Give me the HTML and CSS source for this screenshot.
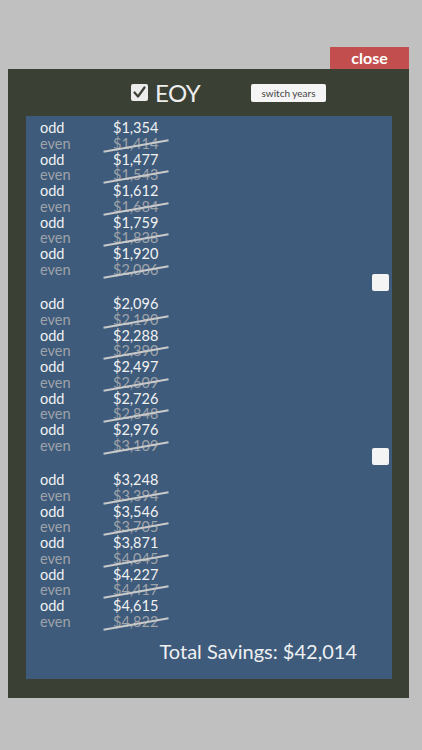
FILE: index.html
```html
<!DOCTYPE html>
<html>
<head>
<meta charset="utf-8">
<link rel="stylesheet" href="styles.css">
</head>
<body>
<div class="screen">
  <div class="close-row"><div class="close-btn">close</div></div>
  <div class="panel">
    <div class="header">
      <div class="eoy-check">
        <svg width="17" height="17" viewBox="0 0 17 17"><rect x="0" y="0" width="17" height="17" rx="2" fill="#ececec"/><path d="M3.5 8.5 L7 12.5 L13.5 3.5" fill="none" stroke="#3b4034" stroke-width="2.2" stroke-linecap="round" stroke-linejoin="round"/></svg>
      </div>
      <div class="eoy-label">EOY</div>
      <div class="switch-btn">switch years</div>
    </div>
    <div class="board">
      <div class="group">
        <div class="row odd"><span class="lbl">odd</span><span class="amt">$1,354</span></div>
        <div class="row even"><span class="lbl">even</span><span class="amt">$1,414</span></div>
        <div class="row odd"><span class="lbl">odd</span><span class="amt">$1,477</span></div>
        <div class="row even"><span class="lbl">even</span><span class="amt">$1,543</span></div>
        <div class="row odd"><span class="lbl">odd</span><span class="amt">$1,612</span></div>
        <div class="row even"><span class="lbl">even</span><span class="amt">$1,684</span></div>
        <div class="row odd"><span class="lbl">odd</span><span class="amt">$1,759</span></div>
        <div class="row even"><span class="lbl">even</span><span class="amt">$1,838</span></div>
        <div class="row odd"><span class="lbl">odd</span><span class="amt">$1,920</span></div>
        <div class="row even"><span class="lbl">even</span><span class="amt">$2,006</span></div>
      </div>
      <div class="sep sep1"><span class="box"></span></div>
      <div class="group">
        <div class="row odd"><span class="lbl">odd</span><span class="amt">$2,096</span></div>
        <div class="row even"><span class="lbl">even</span><span class="amt">$2,190</span></div>
        <div class="row odd"><span class="lbl">odd</span><span class="amt">$2,288</span></div>
        <div class="row even"><span class="lbl">even</span><span class="amt">$2,390</span></div>
        <div class="row odd"><span class="lbl">odd</span><span class="amt">$2,497</span></div>
        <div class="row even"><span class="lbl">even</span><span class="amt">$2,609</span></div>
        <div class="row odd"><span class="lbl">odd</span><span class="amt">$2,726</span></div>
        <div class="row even"><span class="lbl">even</span><span class="amt">$2,848</span></div>
        <div class="row odd"><span class="lbl">odd</span><span class="amt">$2,976</span></div>
        <div class="row even"><span class="lbl">even</span><span class="amt">$3,109</span></div>
      </div>
      <div class="sep sep2"><span class="box"></span></div>
      <div class="group">
        <div class="row odd"><span class="lbl">odd</span><span class="amt">$3,248</span></div>
        <div class="row even"><span class="lbl">even</span><span class="amt">$3,394</span></div>
        <div class="row odd"><span class="lbl">odd</span><span class="amt">$3,546</span></div>
        <div class="row even"><span class="lbl">even</span><span class="amt">$3,705</span></div>
        <div class="row odd"><span class="lbl">odd</span><span class="amt">$3,871</span></div>
        <div class="row even"><span class="lbl">even</span><span class="amt">$4,045</span></div>
        <div class="row odd"><span class="lbl">odd</span><span class="amt">$4,227</span></div>
        <div class="row even"><span class="lbl">even</span><span class="amt">$4,417</span></div>
        <div class="row odd"><span class="lbl">odd</span><span class="amt">$4,615</span></div>
        <div class="row even"><span class="lbl">even</span><span class="amt">$4,822</span></div>
      </div>
      <div class="total">Total Savings: $42,014</div>
    </div>
  </div>
</div>
</body>
</html>
```

FILE: styles.css
```css
html, body {
  margin: 0;
  padding: 0;
}
body {
  background: #c0c0c0;
  font-family: Lato, "Open Sans", sans-serif;
  width: 422px;
  height: 750px;
  overflow: hidden;
}
.screen {
  padding-top: 47px;
}
.close-row {
  display: flex;
  justify-content: flex-end;
  padding-right: 13px;
}
.close-btn {
  width: 79px;
  height: 22px;
  background: #c24f4e;
  color: #ffffff;
  font-weight: 700;
  font-size: 16px;
  line-height: 22px;
  text-align: center;
}
.panel {
  margin-left: 8px;
  width: 401px;
  height: 629px;
  background: #3b4034;
  display: flex;
  flex-direction: column;
  box-sizing: border-box;
}
.header {
  height: 47px;
  display: flex;
  align-items: center;
  padding-left: 123px;
}
.eoy-check {
  width: 17px;
  height: 17px;
  display: flex;
}
.eoy-label {
  width: 96px;
  margin-left: 7px;
  color: #eeeeee;
  font-size: 24px;
  line-height: 24px;
  letter-spacing: -0.5px;
}
.switch-btn {
  width: 75px;
  height: 18px;
  background: #f5f5f5;
  border-radius: 2px;
  color: #444444;
  font-size: 10px;
  line-height: 18px;
  text-align: center;
}
.board {
  margin: 0 17px 19px 18px;
  flex: 1;
  background: #3e5b7b;
  padding-top: 4px;
  display: flex;
  flex-direction: column;
}
.group {
  padding-left: 14px;
}
.row {
  height: 15.75px;
  line-height: 15.75px;
  font-size: 14.5px;
  display: flex;
}
.lbl {
  width: 73px;
}
.amt {
  position: relative;
}
.odd {
  color: #f2f2f2;
}
.even {
  color: #9ea3aa;
}
.even .amt::after {
  content: "";
  position: absolute;
  left: -10px;
  right: -11px;
  top: 9px;
  height: 1.6px;
  background: #c9c9c9;
  transform: rotate(-10deg);
}
.sep {
  height: 18.5px;
  display: flex;
  justify-content: flex-end;
  align-items: flex-start;
  padding-right: 3px;
}
.box {
  width: 17px;
  height: 17px;
  border-radius: 2px;
  background: #f4f4f4;
}
.sep1 .box {
  margin-top: -3.5px;
}
.sep2 .box {
  margin-top: -5.5px;
}
.total {
  text-align: right;
  padding-right: 35px;
  margin-top: 9px;
  color: #eef0f2;
  font-size: 20px;
  line-height: 24px;
}
```
